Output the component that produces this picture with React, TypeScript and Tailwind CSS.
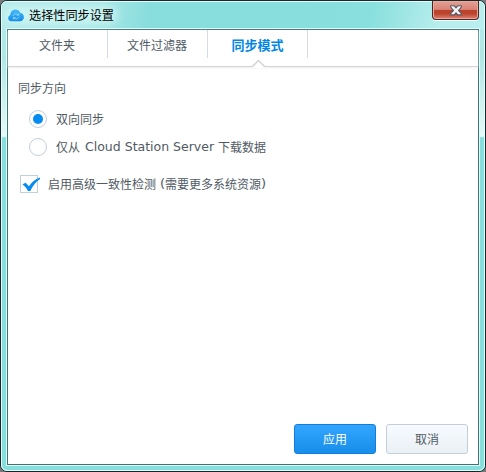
import type { ReactNode } from "react";

function CloudLogo() {
  return (
    <svg width="16" height="13" viewBox="0 0 16 13" className="relative shrink-0">
      <defs>
        <linearGradient id="cloud" x1="0" y1="0" x2="0" y2="1">
          <stop offset="0" stopColor="#45bcf8" />
          <stop offset="1" stopColor="#168ce8" />
        </linearGradient>
      </defs>
      <path
        d="M3.2 12.3A3.2 3.2 0 0 1 .2 9.1C.2 7.5 1 6.3 2.3 5.9 2.4 2.8 4.5.6 7.4.6c2.3 0 4 1.2 4.8 3.2 2.1.2 3.7 2 3.7 4.3 0 2.4-1.6 4.2-3.9 4.2Z"
        fill="url(#cloud)"
      />
      <path
        d="M5.2 7C5.5 4.7 8.8 4 10.2 6M10.7 4.2v2H8.8M11 7.8C10.4 10.2 7.2 10.7 5.9 8.8M5.4 10.5v-2h2"
        fill="none"
        stroke="#8ed6ff"
        strokeWidth="1"
      />
    </svg>
  );
}

function CloseIcon() {
  return (
    <svg width="12" height="11" viewBox="0 0 12 11">
      <path
        d="M.8.8h3.5L6 2.9 7.7.8h3.5v1.5L8.5 5.4l2.7 3v1.5H7.7L6 7.8 4.3 9.9H.8V8.4l2.7-3L.8 2.3Z"
        fill="#f3f3f5"
        stroke="#535766"
        strokeWidth="1.1"
      />
    </svg>
  );
}

function Tab({ children, active = false }: { children: ReactNode; active?: boolean }) {
  return (
    <div
      className={`flex h-7 w-[100px] items-center justify-center border-r border-[#d4dde7] ${
        active ? "pt-px text-[13px] font-bold text-[#0086e5]" : "pr-px pt-px"
      }`}
    >
      {children}
    </div>
  );
}

function Radio({ checked = false, children }: { checked?: boolean; children: ReactNode }) {
  return (
    <div className="flex h-7 items-center gap-[9px]">
      <span className="flex size-[18px] items-center justify-center rounded-full border border-[#c3cedb] bg-white">
        {checked && <span className="size-[10px] rounded-full bg-[#058bf2]" />}
      </span>
      <span className="flex items-center whitespace-pre">{children}</span>
    </div>
  );
}

export default function App() {
  return (
    <div className="h-[472px] w-[486px] overflow-hidden bg-[#77797a] font-['Noto_Sans_CJK_SC',sans-serif] text-[12px] leading-[18px] text-[#505a64]">
      <div className="flex h-[472px] flex-col rounded-[7px] border border-[#17272b] bg-[linear-gradient(180deg,#b4ecec_0,#b0e7e5_12%,#e6f9f7_28.8%,#88dddd_29.1%,#87dfdc_100%)]">
        <div className="flex h-full flex-col rounded-[6px] border border-[#e3ffff] px-[5px] pb-[5px]">
          <header className="-mx-[5px] flex h-[27px] shrink-0 items-start justify-between rounded-t-[5px] bg-[linear-gradient(100deg,#b5ebea_0%,#a8e7e6_20%,#88dddd_31%,#88dfdd_76%,#b8eeed_91%)] pl-[6px] pr-[5px]">
            <div className="relative flex h-[26px] items-center gap-[5px]">
              <span className="absolute -inset-x-1 inset-y-1 rounded-full bg-[#d2f7f5]/80 blur-[4px]" />
              <CloudLogo />
              <span className="relative text-[12.15px] leading-[18px] text-black">选择性同步设置</span>
            </div>
            <button
              aria-label="关闭"
              className="-mt-px flex h-[19px] w-[47px] items-center justify-center rounded-b-[4px] border border-t-0 border-[#512325] bg-[linear-gradient(180deg,#e3a094_0,#d98476_47%,#b9432c_50%,#bc442d_70%,#dc8174_100%)] pl-px shadow-[0_1px_0_#e9ffff,inset_0_0_0_1px_#eba99b]"
            >
              <CloseIcon />
            </button>
          </header>

          <main className="flex min-h-0 flex-1 flex-col border border-[#437171] bg-white shadow-[0_0_0_1px_#dcffff]">
            <nav className="flex h-[37px] shrink-0 border-b border-[#d4d4d4] shadow-[0_1px_2px_#ededed]">
              <Tab>文件夹</Tab>
              <Tab>文件过滤器</Tab>
              <div className="relative">
                <Tab active>同步模式</Tab>
                <svg className="absolute left-[43px] top-[28px]" width="15" height="10" viewBox="0 0 15 10">
                  <path d="M0 10V8.5h1L7.5 2 14 8.5h1V10Z" fill="white" />
                  <path d="M0 8.5h1.5l6-6 6 6H15" fill="none" stroke="#d4d4d4" strokeWidth="1.5" />
                </svg>
              </div>
            </nav>

            <section className="flex-1 pl-[10px] pt-[12px]">
              <h2>同步方向</h2>
              <div className="pl-[11px] pt-[8px]">
                <Radio checked>双向同步</Radio>
                <Radio>
                  仅从
                  <span className="pl-[5px] pr-[4px] font-['DejaVu_Sans',sans-serif] text-[12.5px]">
                    Cloud Station Server
                  </span>
                  下载数据
                </Radio>
              </div>
              <label className="mt-[14px] flex h-[18px] items-center gap-[10px] pl-[2px]">
                <span className="relative block size-[18px] border border-[#c3cedb]">
                  <svg className="absolute left-px top-px" width="18" height="15" viewBox="0 0 18 15">
                    <path d="M.5 7.3 3.6 5.8 7 9.3C9.5 5.6 13 2.2 18 .6V2C14 4.6 10.8 8.8 8.3 14H6C4.6 11.4 2.8 9.2.5 7.3Z" fill="#058bf2" />
                  </svg>
                </span>
                <span className="flex items-center">
                  启用高级一致性检测
                  <span className="pl-[4px] font-['DejaVu_Sans',sans-serif] text-[13px]">(</span>
                  需要更多系统资源
                  <span className="font-['DejaVu_Sans',sans-serif] text-[13px]">)</span>
                </span>
              </label>
            </section>

            <footer className="flex justify-end gap-[10px] pb-[10px] pr-[10px]">
              <button className="h-[30px] w-[82px] rounded-[3px] border border-[#117fd5] bg-linear-to-b from-[#32a6ff] to-[#168eea] text-white">
                应用
              </button>
              <button className="h-[30px] w-[82px] rounded-[3px] border border-[#c3cedb] bg-linear-to-b from-[#f7fbff] to-[#ebf0f4]">
                取消
              </button>
            </footer>
          </main>
        </div>
      </div>
    </div>
  );
}
